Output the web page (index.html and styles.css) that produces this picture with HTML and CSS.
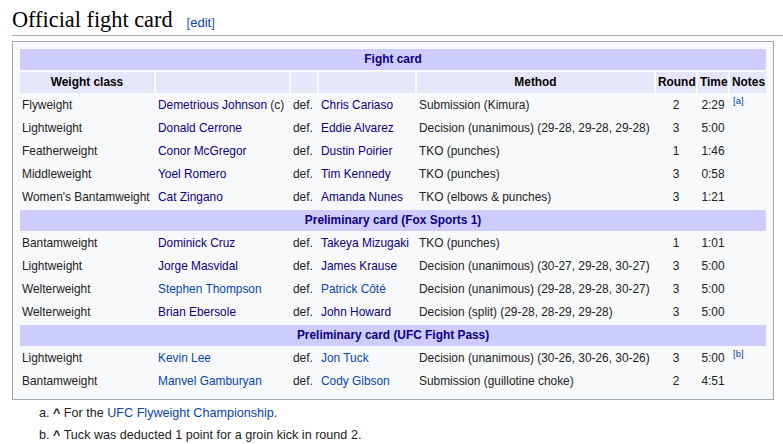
FILE: index.html
```html
<!DOCTYPE html>
<html lang="en">
<head>
<meta charset="utf-8">
<title>Official fight card</title>
<link rel="stylesheet" href="styles.css">
</head>
<body>
<div class="page">
  <h2 class="section-title"><span class="headline">Official fight card</span><span class="editsection"><span class="bracket">[</span><a href="#">edit</a><span class="bracket">]</span></span></h2>

  <div class="card-box">
    <table class="fight-table">
      <colgroup>
        <col class="c-weight"><col class="c-f1"><col class="c-def"><col class="c-f2"><col class="c-method"><col class="c-round"><col class="c-time"><col class="c-notes">
      </colgroup>
      <tr><th class="sect" colspan="8">Fight card</th></tr>
      <tr class="colhead"><th>Weight class</th><th></th><th></th><th></th><th>Method</th><th>Round</th><th>Time</th><th>Notes</th></tr>
      <tr><td>Flyweight</td><td><a class="v" href="#">Demetrious Johnson</a> (c)</td><td>def.</td><td><a class="v" href="#">Chris Cariaso</a></td><td>Submission (Kimura)</td><td class="ctr">2</td><td class="ctr">2:29</td><td><sup class="ref"><a href="#">[a]</a></sup></td></tr>
      <tr><td>Lightweight</td><td><a class="v" href="#">Donald Cerrone</a></td><td>def.</td><td><a class="v" href="#">Eddie Alvarez</a></td><td>Decision (unanimous) (29-28, 29-28, 29-28)</td><td class="ctr">3</td><td class="ctr">5:00</td><td></td></tr>
      <tr><td>Featherweight</td><td><a class="v" href="#">Conor McGregor</a></td><td>def.</td><td><a class="v" href="#">Dustin Poirier</a></td><td>TKO (punches)</td><td class="ctr">1</td><td class="ctr">1:46</td><td></td></tr>
      <tr><td>Middleweight</td><td><a class="v" href="#">Yoel Romero</a></td><td>def.</td><td><a class="v" href="#">Tim Kennedy</a></td><td>TKO (punches)</td><td class="ctr">3</td><td class="ctr">0:58</td><td></td></tr>
      <tr><td>Women's Bantamweight</td><td><a class="v" href="#">Cat Zingano</a></td><td>def.</td><td><a class="v" href="#">Amanda Nunes</a></td><td>TKO (elbows &amp; punches)</td><td class="ctr">3</td><td class="ctr">1:21</td><td></td></tr>
      <tr><th class="sect" colspan="8">Preliminary card (Fox Sports 1)</th></tr>
      <tr><td>Bantamweight</td><td><a class="v" href="#">Dominick Cruz</a></td><td>def.</td><td><a class="v" href="#">Takeya Mizugaki</a></td><td>TKO (punches)</td><td class="ctr">1</td><td class="ctr">1:01</td><td></td></tr>
      <tr><td>Lightweight</td><td><a class="v" href="#">Jorge Masvidal</a></td><td>def.</td><td><a class="v" href="#">James Krause</a></td><td>Decision (unanimous) (30-27, 29-28, 30-27)</td><td class="ctr">3</td><td class="ctr">5:00</td><td></td></tr>
      <tr><td>Welterweight</td><td><a href="#">Stephen Thompson</a></td><td>def.</td><td><a href="#">Patrick Côté</a></td><td>Decision (unanimous) (29-28, 29-28, 30-27)</td><td class="ctr">3</td><td class="ctr">5:00</td><td></td></tr>
      <tr><td>Welterweight</td><td><a class="v" href="#">Brian Ebersole</a></td><td>def.</td><td><a class="v" href="#">John Howard</a></td><td>Decision (split) (29-28, 28-29, 29-28)</td><td class="ctr">3</td><td class="ctr">5:00</td><td></td></tr>
      <tr><th class="sect" colspan="8">Preliminary card (UFC Fight Pass)</th></tr>
      <tr><td>Lightweight</td><td><a href="#">Kevin Lee</a></td><td>def.</td><td><a href="#">Jon Tuck</a></td><td>Decision (unanimous) (30-26, 30-26, 30-26)</td><td class="ctr">3</td><td class="ctr">5:00</td><td><sup class="ref"><a href="#">[b]</a></sup></td></tr>
      <tr><td>Bantamweight</td><td><a href="#">Manvel Gamburyan</a></td><td>def.</td><td><a href="#">Cody Gibson</a></td><td>Submission (guillotine choke)</td><td class="ctr">2</td><td class="ctr">4:51</td><td></td></tr>
    </table>
  </div>

  <ol class="notes">
    <li><b class="caret">^</b> For the <a href="#">UFC Flyweight Championship</a>.</li>
    <li><b class="caret">^</b> Tuck was deducted 1 point for a groin kick in round 2.</li>
  </ol>
</div>
</body>
</html>
```

FILE: styles.css
```css
html, body {
  margin: 0;
  padding: 0;
  background: #ffffff;
}

body {
  font-family: "Liberation Sans", Arial, sans-serif;
  color: #222222;
}

a {
  color: #0645ad;
  text-decoration: none;
}

a.v {
  color: #0b0080;
}

.page {
  padding: 0 0 0 12px;
  width: 771px;
}

.section-title {
  margin: 0;
  padding: 5px 0 0 0;
  height: 30px;
  line-height: 30px;
  font-family: "Liberation Serif", "Times New Roman", serif;
  font-weight: normal;
  font-size: 22.3px;
  color: #000000;
  border-bottom: 1px solid #a2a9b1;
  white-space: nowrap;
}

.editsection {
  font-family: "Liberation Sans", Arial, sans-serif;
  font-size: 13px;
  margin-left: 14px;
  vertical-align: baseline;
}

.editsection .bracket {
  color: #3b5ba8;
}

.card-box {
  margin-top: 5px;
  width: 762px;
  box-sizing: border-box;
  border: 1px solid #a2a9b1;
  background: #f8f9fa;
  padding: 5px;
}

.fight-table {
  width: 750px;
  table-layout: fixed;
  border-collapse: separate;
  border-spacing: 2px;
  font-size: 11.9px;
}

.c-weight { width: 134px; }
.c-f1 { width: 133px; }
.c-def { width: 26px; }
.c-f2 { width: 96px; }
.c-method { width: 237px; }
.c-round { width: 40px; }
.c-time { width: 30px; }
.c-notes { width: 36px; }

.fight-table th,
.fight-table td {
  padding: 2px 2px;
  height: 17px;
  line-height: 17px;
  white-space: nowrap;
  overflow: visible;
  vertical-align: middle;
}

.fight-table td {
  text-align: left;
}

.fight-table th.sect {
  background: #ccccff;
  color: #0b0080;
  text-align: center;
  font-weight: bold;
}

.colhead th {
  background: #e6e6fa;
  color: #000000;
  text-align: center;
  font-weight: bold;
}

.fight-table td.ctr {
  text-align: center;
}

.ref {
  font-size: 9.5px;
  line-height: 0;
  vertical-align: 5px;
  margin-left: 1px;
}

.notes {
  list-style: lower-alpha;
  margin: 2px 0 0 0;
  padding: 0 0 0 41px;
  font-size: 12.6px;
}

.notes li {
  line-height: 22px;
}

.caret {
  font-weight: bold;
  color: #222222;
}
```
